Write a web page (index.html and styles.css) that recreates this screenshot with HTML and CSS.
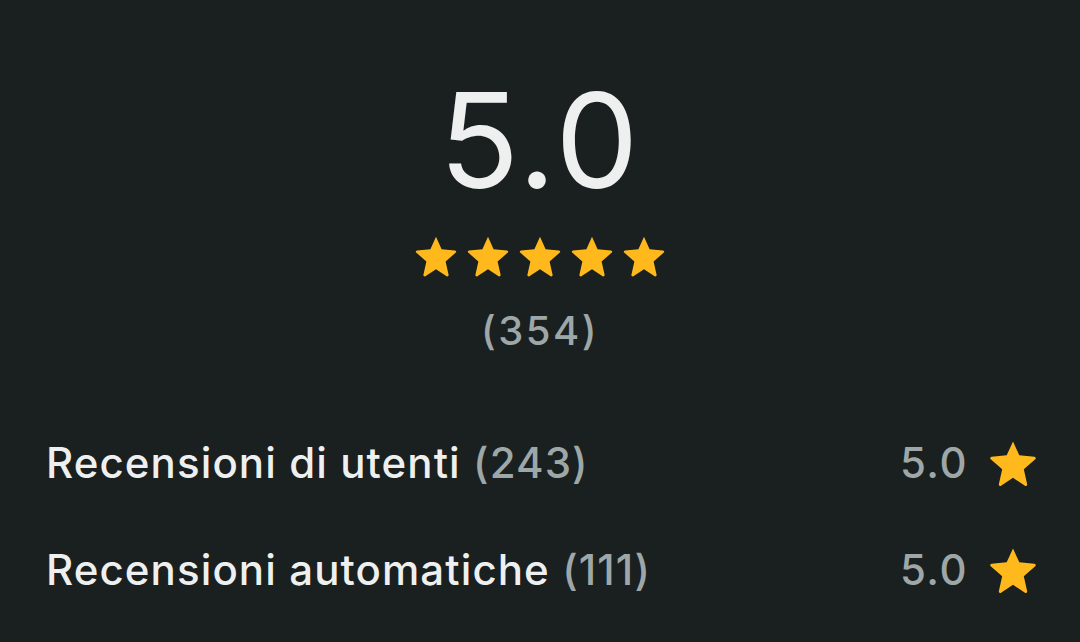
FILE: index.html
```html
<!DOCTYPE html>
<html lang="it">
<head>
    <meta charset="UTF-8">
    <meta name="viewport" content="width=device-width, initial-scale=1.0">
    <title>Valutazioni</title>
    <link rel="stylesheet" href="styles.css">
</head>
<body>
    <svg width="0" height="0" class="defs">
        <symbol id="star" viewBox="0 0 24 24">
            <path d="M12 2.4l2.8 6.2 6.7.6c.6.1.8.8.4 1.1l-5.1 4.5 1.5 6.6c.1.6-.5 1-1 .7L12 18.6l-5.3 3.5c-.5.3-1.1-.1-1-.7l1.5-6.6-5.1-4.5c-.4-.3-.2-1 .4-1.1l6.7-.6 2.8-6.2z"/>
        </symbol>
    </svg>

    <div class="summary">
        <div class="score">5.0</div>
        <div class="stars">
            <svg class="star"><use href="#star"/></svg>
            <svg class="star"><use href="#star"/></svg>
            <svg class="star"><use href="#star"/></svg>
            <svg class="star"><use href="#star"/></svg>
            <svg class="star"><use href="#star"/></svg>
        </div>
        <div class="total">(354)</div>
    </div>

    <div class="breakdown">
        <div class="row">
            <div class="label">Recensioni di utenti <span class="count">(243)</span></div>
            <div class="rating">5.0 <svg class="star small"><use href="#star"/></svg></div>
        </div>
        <div class="row">
            <div class="label">Recensioni automatiche <span class="count">(111)</span></div>
            <div class="rating">5.0 <svg class="star small"><use href="#star"/></svg></div>
        </div>
    </div>
</body>
</html>
```

FILE: styles.css
```css
body {
    margin: 0;
    height: 642px;
    background-color: #1a1f1f;
    color: #eef0f0;
    font-family: Inter, "Noto Sans", sans-serif;
    overflow: hidden;
}

.defs {
    position: absolute;
}

.summary {
    display: flex;
    flex-direction: column;
    align-items: center;
    padding-top: 66px;
}

.score {
    font-size: 132px;
    font-weight: 400;
    line-height: 148px;
    letter-spacing: 2.5px;
}

.stars {
    display: flex;
    gap: 4px;
    margin-top: 18px;
}

.star {
    width: 48px;
    height: 48px;
    fill: #ffb91d;
}

.total {
    margin-top: 26px;
    font-size: 40px;
    font-weight: 500;
    letter-spacing: 2.5px;
    color: #9ea7a8;
}

.breakdown {
    padding: 54px 40px 0 46px;
}

.row {
    display: flex;
    align-items: center;
    justify-content: space-between;
    height: 107px;
}

.label {
    font-size: 42px;
    font-weight: 500;
    letter-spacing: 1.1px;
}

.count {
    color: #9ea7a8;
}

.rating {
    display: flex;
    align-items: center;
    gap: 18px;
    font-size: 42px;
    font-weight: 500;
    letter-spacing: 1.5px;
    color: #9ea7a8;
}

.star.small {
    width: 54px;
    height: 54px;
}
```
